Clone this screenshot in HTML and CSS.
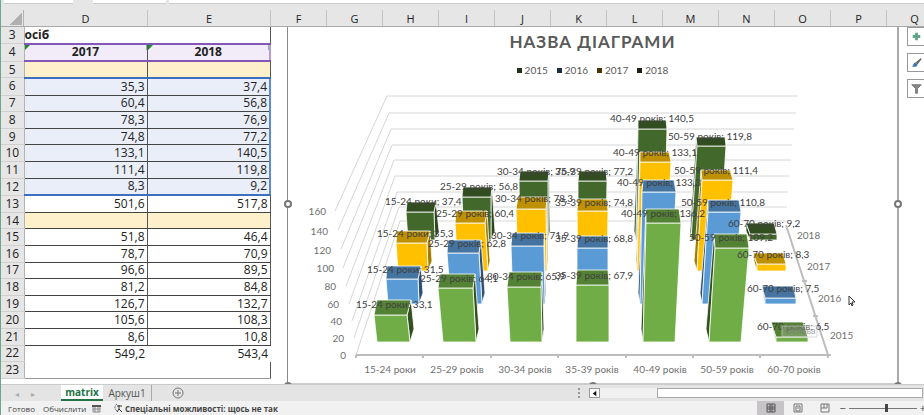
FILE: index.html
```
<!DOCTYPE html>
<html lang="uk">
  <head>
    <meta charset="UTF-8" />
    <meta name="viewport" content="width=device-width, initial-scale=1.0" />
    <title>matrix</title>
    <link rel="stylesheet" href="styles.css">
  </head>
  <body>
    <div class="formula-bar">
      <div class="name-box"></div>
      <div class="fx-box"></div>
      <div class="formula-box"></div>
    </div>

    <main class="sheet">
      <div class="col-heads">
        <div class="corner"></div>
        <div class="col wide">D</div>
        <div class="col wide">E</div>
        <div class="col">F</div>
        <div class="col">G</div>
        <div class="col">H</div>
        <div class="col">I</div>
        <div class="col">J</div>
        <div class="col">K</div>
        <div class="col">L</div>
        <div class="col">M</div>
        <div class="col">N</div>
        <div class="col">O</div>
        <div class="col">P</div>
        <div class="col">Q</div>
      </div>

      <div class="work">
        <table class="cells">
          <tbody id="rows"></tbody>
        </table>

        <section class="chart">
          <h1 class="chart-title">НАЗВА ДІАГРАМИ</h1>
          <ul class="legend">
            <li><i class="key y2015"></i>2015</li>
            <li><i class="key y2016"></i>2016</li>
            <li><i class="key y2017"></i>2017</li>
            <li><i class="key y2018"></i>2018</li>
          </ul>
          <svg class="plot" id="plot" viewBox="288 84 609 299"></svg>
          <span class="handle left"></span>
          <span class="handle right"></span>
          <span class="handle bottom-left"></span>
          <span class="handle bottom"></span>
          <span class="handle bottom-right"></span>
        </section>

        <div class="chart-tools">
          <button type="button" aria-label="Елементи діаграми">
            <svg viewBox="0 0 18 18"><path d="M9 5v8M5 9h8" stroke="#5fa58a" stroke-width="3" fill="none" /></svg>
          </button>
          <button type="button" aria-label="Стилі діаграми">
            <svg viewBox="0 0 18 18">
              <path d="M14 4L8 9l2 2 4-5z" fill="#666" />
              <path d="M8 9c-3 0-2 4-4 4 2 1 6 1 6-2z" fill="#3d78b8" />
            </svg>
          </button>
          <button type="button" aria-label="Фільтри діаграми">
            <svg viewBox="0 0 18 18"><path d="M4 5h10L10 9v5H8V9z" fill="#888" stroke="#777" /></svg>
          </button>
        </div>
      </div>
    </main>

    <div class="tab-bar">
      <div class="tab-arrows">
        <button type="button" aria-label="Назад">◂</button>
        <button type="button" aria-label="Вперед">▸</button>
      </div>
      <button type="button" class="tab active">matrix</button>
      <button type="button" class="tab">Аркуш1</button>
      <button type="button" class="add-tab" aria-label="Новий аркуш">
        <svg viewBox="0 0 12 12"><circle cx="6" cy="6" r="5" fill="none" stroke="#777" /><path d="M6 3v6M3 6h6" stroke="#777" /></svg>
      </button>
      <div class="scroll">
        <span class="dots"></span>
        <button type="button" class="scroll-left" aria-label="Прокрутити ліворуч">
          <svg viewBox="0 0 10 10"><path d="M7 2v6L3 5z" fill="#111" /></svg>
        </button>
        <div class="track"></div>
        <div class="thumb"></div>
      </div>
    </div>

    <footer class="status-bar">
      <span class="ready">Готово</span>
      <span class="calc">Обчислити</span>
      <svg class="macro" viewBox="0 0 9 9"><path d="M0 1h9v2H0z" fill="#555" /><path d="M1 3v5h7V3M1 5h7M3 3v5M6 3v5" stroke="#888" fill="none" /></svg>
      <svg class="access" viewBox="0 0 10 10">
        <path d="M4 1a4 4 0 0 0 0 7" stroke="#555" fill="none" stroke-dasharray="2 1" />
        <path d="M4 3h5M6 2v4l-2 3M6 6l3 3" stroke="#333" fill="none" />
      </svg>
      <b class="access-text">Спеціальні можливості: щось не так</b>
      <div class="views">
        <button type="button" class="view on" aria-label="Звичайний">
          <svg viewBox="0 0 10 10"><path d="M1 1h8v8H1zM1 4h8M1 6h8M4 1v8M6 1v8" stroke="#555" fill="none" /></svg>
        </button>
        <button type="button" class="view" aria-label="Розмітка сторінки">
          <svg viewBox="0 0 10 10"><path d="M1 1h8v8H1zM3 3h4v5H3zM4 5h2" stroke="#777" fill="none" /></svg>
        </button>
        <button type="button" class="view" aria-label="Сторінковий">
          <svg viewBox="0 0 10 10"><path d="M1 1h8v8H1zM1 5h6V1M4 1v4" stroke="#777" fill="none" /></svg>
        </button>
      </div>
      <div class="zoom">
        <span>−</span>
        <input type="range" min="10" max="190" value="110" aria-label="Масштаб" />
        <span>+</span>
      </div>
    </footer>

    <svg class="cursor" viewBox="0 0 8 12"><path d="M1 1v9l2-2 1 3 1-1-1-3h3z" fill="#fff" stroke="#333" /></svg>

    <script src="script.js"></script>
  </body>
</html>
```
FILE: styles.css
```
* {
  margin: 0;
  padding: 0;
  box-sizing: border-box;
}

:root {
  --sheet-font: "Open Sans", "Noto Sans", sans-serif;
  --chart-font: Lato, "Open Sans", sans-serif;
  --head-bg: #e6e6e6;
  --line: #b4b4b4;
  --purple: #8257b8;
  --blue: #3c6fc0;
}

body {
  height: 100vh;
  display: flex;
  flex-direction: column;
  overflow: hidden;
  background: #fff;
  color: #222;
  font-family: var(--sheet-font);
  border-left: 1px solid #6fa58a;
}

button {
  border: none;
  background: none;
  font-family: inherit;
}

.formula-bar {
  height: 10px;
  flex: none;
  display: flex;
  background: var(--head-bg);
  padding-left: 3px;
}

.formula-bar div {
  background: #fff;
  height: 4px;
  border-bottom: 1px solid #ccc;
}

.name-box {
  width: 69px;
  margin-right: 20px;
}

.fx-box {
  width: 73px;
  margin-right: 3px;
}

.formula-box {
  flex: 1;
}

.sheet {
  flex: 1;
  min-height: 0;
  display: flex;
  flex-direction: column;
}

.col-heads {
  height: 17px;
  flex: none;
  display: flex;
  overflow: hidden;
  background: var(--head-bg);
  border-bottom: 1px solid #aaa;
}

.corner {
  width: 23px;
  flex: none;
  border-right: 1px solid var(--line);
  background: linear-gradient(135deg, transparent 50%, #b0b0b0 50%) 8px 3px / 13px 12px no-repeat;
}

.col {
  width: 56px;
  flex: none;
  border-right: 1px solid #c4c4c4;
  text-align: center;
  font-size: 11px;
  line-height: 18px;
}

.col.wide {
  width: 124px;
}

.col.wide + .col.wide {
  width: 123px;
}

.work {
  flex: 1;
  min-height: 0;
  display: flex;
  overflow: hidden;
}

.cells {
  width: 270px;
  height: 352px;
  flex: none;
  table-layout: fixed;
  border-collapse: collapse;
  font-size: 12px;
  line-height: 14px;
}

.cells th.num {
  width: 23px;
  background: var(--head-bg);
  border-right: 1px solid var(--line);
  border-bottom: 1px solid #d0d0d0;
  font-weight: 400;
}

.cells td {
  border-right: 1px solid #555;
  border-bottom: 1px solid #444;
  padding: 0 2px;
  text-align: right;
}

.cells .title td {
  text-align: left;
  font-weight: 700;
  padding: 0;
  border-bottom: 2px solid var(--purple);
}

.cells .title td:first-of-type,
.cells .plain td {
  border-right: none;
}

.cells .years td {
  text-align: center;
  font-weight: 700;
  background: linear-gradient(135deg, #1d8a2b 4px, transparent 4px) #f2ecf9;
  border-bottom: 2px solid var(--purple);
}

.cells .years td:last-child {
  border-right: 2px solid #b79ad6;
}

.cells .band td {
  background: #fff0cc;
}

.cells .band.top td,
.cells .picked.last td {
  border-bottom: 2px solid var(--blue);
}

.cells .picked td {
  background: #e9eef9;
}

.cells .picked td:last-child {
  border-right: 2px solid #5f8dcc;
}

.cells .plain td {
  border-bottom: none;
}

.cells .blank td {
  border-bottom: 1px solid #999;
}

.cells .blank td:first-of-type {
  border-right: none;
}

.chart {
  position: relative;
  flex: 1;
  min-width: 0;
  margin-left: 16px;
  display: flex;
  flex-direction: column;
  border-left: 1px solid #888;
  border-right: 2px solid #aaa;
  border-bottom: 1px solid #ccc;
  color: #595959;
  font-family: var(--chart-font);
}

.chart-title {
  height: 30px;
  text-align: center;
  font-size: 17px;
  line-height: 29px;
  letter-spacing: 1px;
}

.legend {
  height: 27px;
  display: flex;
  justify-content: center;
  gap: 9px;
  list-style: none;
  font-size: 10px;
  line-height: 27px;
}

.legend li {
  display: flex;
  align-items: center;
  gap: 3px;
}

.key {
  width: 5px;
  height: 5px;
}

.y2015 {
  background: #22301a;
}

.y2016 {
  background: #1d2c40;
}

.y2017 {
  background: #4a3500;
}

.y2018 {
  background: #1c1f18;
}

.plot {
  flex: 1;
  min-height: 0;
  width: 100%;
}

.plot text {
  font-family: var(--chart-font);
  font-size: 10px;
  fill: #707070;
}

.plot .value {
  fill: #404040;
}

.plot .grid {
  fill: none;
  stroke: #d6d6d6;
}

.plot .axis {
  fill: none;
  stroke: #bdbdbd;
  stroke-width: 2;
}

.plot .bar path {
  stroke: #fff;
  stroke-opacity: 0.8;
  stroke-linejoin: round;
}

.plot .tip rect {
  fill: #fff;
  fill-opacity: 0.2;
  stroke: #ccc;
  stroke-opacity: 0.7;
}

.plot .tip text {
  font-size: 9px;
  fill: #777;
  fill-opacity: 0.7;
}

.handle {
  position: absolute;
  width: 8px;
  height: 8px;
  border: 2px solid #777;
  border-radius: 50%;
  background: #fff;
}

.handle.left {
  left: -4px;
  top: calc(50% - 5px);
}

.handle.right {
  right: -5px;
  top: calc(50% - 5px);
}

.handle.bottom-left {
  left: -4px;
  bottom: -7px;
}

.handle.bottom {
  left: calc(50% - 4px);
  bottom: -7px;
}

.handle.bottom-right {
  right: -5px;
  bottom: -7px;
}

.chart-tools {
  width: 17px;
  margin-left: 8px;
  flex: none;
  display: flex;
  flex-direction: column;
  gap: 7px;
}

.chart-tools button {
  width: 19px;
  height: 19px;
  border: 1px solid #999;
  background: #fff;
}

.chart-tools svg {
  display: block;
  width: 17px;
  height: 17px;
}

.tab-bar {
  height: 17px;
  flex: none;
  display: flex;
  align-items: stretch;
  background: #e4e4e4;
  border-top: 1px solid #ccc;
  font-size: 11px;
}

.tab-arrows {
  width: 60px;
  padding-left: 14px;
  display: flex;
  gap: 12px;
}

.tab-arrows button {
  color: #aaa;
  font-size: 8px;
}

.tab {
  width: 42px;
  font-size: 10px;
  color: #555;
}

.tab:not(.active) {
  width: 49px;
  border-right: 1px solid #aaa;
}

.tab.active {
  background: #fff;
  border-bottom: 2px solid #217346;
  color: #217346;
  font-weight: 700;
}

.add-tab {
  width: 12px;
  margin-left: 20px;
}

.add-tab svg {
  display: block;
  width: 12px;
}

.scroll {
  flex: 1;
  max-width: 346px;
  margin-left: auto;
  padding: 3px 1px 3px 0;
  display: flex;
}

.dots {
  width: 11px;
  border-left: 2px dotted #999;
}

.scroll-left {
  width: 11px;
  border: 1px solid #999;
  background: #fff;
}

.scroll-left svg {
  display: block;
  width: 9px;
}

.track {
  width: 57px;
  background: #f1f1f1;
}

.thumb {
  flex: 1;
  background: #fff;
  border: 1px solid #aaa;
}

.status-bar {
  height: 14px;
  flex: none;
  display: flex;
  align-items: center;
  background: #f1f1f1;
  font-size: 8px;
  color: #444;
}

.ready {
  width: 35px;
  margin-left: 7px;
}

.calc {
  width: 49px;
}

.macro {
  width: 9px;
  margin-right: 12px;
}

.access {
  width: 10px;
  margin-right: 2px;
}

.access-text {
  white-space: nowrap;
}

.views {
  margin-left: auto;
  display: flex;
}

.view {
  width: 27px;
  height: 14px;
  display: flex;
  align-items: center;
  justify-content: center;
}

.view.on {
  background: #c6c4c6;
}

.view svg {
  width: 10px;
}

.zoom {
  display: flex;
  align-items: center;
  gap: 3px;
  margin-right: -2px;
  padding-left: 1px;
  font-size: 11px;
  line-height: 14px;
}

.zoom input {
  appearance: none;
  width: 68px;
  height: 1px;
  background: #777;
}

.zoom input::-webkit-slider-thumb {
  appearance: none;
  width: 3px;
  height: 8px;
  background: #444;
}

.cursor {
  position: absolute;
  left: 848px;
  top: 295px;
  width: 8px;
}
```
FILE: script.js
```
const rows = [
  { n: 3, d: "осіб", e: "", cls: "title" },
  { n: 4, d: "2017", e: "2018", cls: "years" },
  { n: 5, d: "", e: "", cls: "band top" },
  { n: 6, d: "35,3", e: "37,4", cls: "picked" },
  { n: 7, d: "60,4", e: "56,8", cls: "picked" },
  { n: 8, d: "78,3", e: "76,9", cls: "picked" },
  { n: 9, d: "74,8", e: "77,2", cls: "picked" },
  { n: 10, d: "133,1", e: "140,5", cls: "picked" },
  { n: 11, d: "111,4", e: "119,8", cls: "picked" },
  { n: 12, d: "8,3", e: "9,2", cls: "picked last" },
  { n: 13, d: "501,6", e: "517,8", cls: "" },
  { n: 14, d: "", e: "", cls: "band" },
  { n: 15, d: "51,8", e: "46,4", cls: "" },
  { n: 16, d: "78,7", e: "70,9", cls: "" },
  { n: 17, d: "96,6", e: "89,5", cls: "" },
  { n: 18, d: "81,2", e: "84,8", cls: "" },
  { n: 19, d: "126,7", e: "132,7", cls: "" },
  { n: 20, d: "105,6", e: "108,3", cls: "" },
  { n: 21, d: "8,6", e: "10,8", cls: "" },
  { n: 22, d: "549,2", e: "543,4", cls: "plain" },
  { n: 23, d: "", e: "", cls: "blank" },
];

document.getElementById("rows").innerHTML = rows
  .map((r) => `<tr class="${r.cls}"><th class="num" scope="row">${r.n}</th><td>${r.d}</td><td>${r.e}</td></tr>`)
  .join("");

const groups = ["15-24 роки", "25-29 років", "30-34 років", "35-39 років", "40-49 років", "50-59 років", "60-70 років"];

// bars: value, label x/y, back edge (x1 x2 y), front edge (x1 x2 y), base (x1 x2), side corner x
const series = [
  {
    base: 240, back: 231, front: "#43682b", top: "#324e20", side: "#2c451d",
    bars: [
      ["37,4", 385, 205, 407, 436, 202, 406, 434, 212, 408, 435, 439],
      ["56,8", 440, 190, 463, 492, 187, 462, 491, 197, 464, 491, 495],
      ["76,9", 497, 175, 520, 549, 171, 519, 548, 181, 520, 548, 550],
      ["77,2", 555, 175, 579, 606, 171, 578, 607, 181, 578, 606, 0],
      ["140,5", 610, 122, 638, 666, 120, 638, 667, 129, 636, 664, 634],
      ["119,8", 668, 140, 696, 725, 137, 697, 726, 146, 691, 720, 690],
      ["9,2", 728, 227, 746, 774, 223, 750, 777, 234, 750, 777, 746],
    ],
  },
  {
    base: 271, back: 261, front: "#ffc000", top: "#bf9000", side: "#a67c00",
    bars: [
      ["35,3", 377, 237, 397, 430, 231, 396, 427, 243, 398, 428, 432],
      ["60,4", 436, 217, 456, 487, 211, 455, 485, 223, 458, 488, 490],
      ["78,3", 495, 202, 518, 547, 197, 516, 546, 209, 518, 547, 548],
      ["74,8", 555, 206, 578, 607, 199, 577, 608, 211, 578, 607, 0],
      ["133,1", 613, 156, 640, 669, 152, 640, 671, 162, 637, 666, 636],
      ["111,4", 674, 174, 701, 730, 170, 702, 733, 180, 697, 726, 694],
      ["8,3", 737, 258, 753, 783, 253, 757, 786, 264, 757, 786, 754],
    ],
  },
  {
    base: 304, back: 293, front: "#5b9bd5", top: "#44749f", side: "#2e5076",
    bars: [
      ["31,5", 367, 273, 387, 421, 266, 386, 418, 279, 388, 419, 423],
      ["62,8", 428, 247, 448, 481, 240, 447, 479, 253, 451, 482, 485],
      ["71,9", 491, 239, 512, 544, 233, 511, 544, 246, 513, 545, 546],
      ["68,8", 555, 242, 578, 608, 236, 577, 608, 248, 577, 608, 0],
      ["133,3", 617, 186, 643, 674, 180, 642, 676, 192, 640, 670, 638],
      ["110,8", 681, 206, 708, 739, 200, 708, 741, 212, 702, 733, 700],
      ["7,5", 747, 292, 762, 793, 286, 765, 796, 298, 765, 796, 763],
    ],
  },
  {
    base: 342, back: 329, front: "#70ad47", top: "#548235", side: "#345020",
    bars: [
      ["33,1", 356, 308, 377, 411, 300, 374, 407, 315, 377, 410, 414],
      ["64,1", 420, 282, 440, 475, 274, 438, 473, 288, 443, 476, 479],
      ["65,9", 487, 280, 509, 542, 272, 507, 541, 287, 510, 542, 544],
      ["67,9", 555, 279, 577, 608, 270, 576, 609, 285, 576, 609, 0],
      ["136,2", 621, 217, 646, 679, 209, 646, 681, 223, 643, 675, 641],
      ["109,2", 689, 241, 714, 747, 234, 715, 749, 248, 709, 741, 706],
      ["6,5", 757, 330, 771, 803, 322, 776, 808, 337, 776, 808, 773],
    ],
  },
];

// back wall x1 x2 y, then the front end of the line on the left wall
const grid = [
  [387, 798, 96, 335, 211],
  [389, 796, 113, 338, 230],
  [391, 794, 129, 341, 249],
  [392, 792, 145, 343, 268],
  [394, 791, 160, 346, 286],
  [395, 789, 176, 349, 304],
  [397, 788, 192, 352, 321],
  [399, 787, 207, 354, 338],
  [400, 786, 221, 356, 355],
];

const scale = [
  [160, 326, 215],
  [140, 328, 235],
  [120, 331, 254],
  [100, 334, 272],
  [80, 336, 290],
  [60, 339, 308],
  [40, 342, 325],
  [20, 344, 342],
  [0, 346, 359],
];

const depth = [
  [2018, 797, 239],
  [2017, 807, 270],
  [2016, 818, 302],
  [2015, 830, 339],
];

let out = "";
let labels = "";

grid.forEach(([x1, x2, y, fx, fy]) => {
  out += `<path class="grid" d="M${fx} ${fy}L${x1} ${y}H${x2}" />`;
});

out += `<path class="axis" d="M356 355H831M828 355L786 225M802 281h5M813 316h5" />`;
for (let i = 0; i < 8; i++) {
  out += `<path class="axis" d="M${356 + Math.round(i * 67.4)} 355v3" />`;
}

series.forEach((s) => {
  // the middle column faces the viewer, so draw towards it from both ends
  [0, 1, 2, 6, 5, 4, 3].forEach((i) => {
    const [value, lx, ly, bx1, bx2, by, fx1, fx2, fy, x1, x2, sx] = s.bars[i];
    out += `<g class="bar">`;
    if (i < 3) {
      out += `<path fill="${s.side}" d="M${fx2} ${fy}L${bx2} ${by}L${sx} ${s.back}L${x2} ${s.base}z" />`;
    } else if (i > 3) {
      out += `<path fill="${s.side}" d="M${fx1} ${fy}L${bx1} ${by}L${sx} ${s.back}L${x1} ${s.base}z" />`;
    }
    out += `<path fill="${s.front}" d="M${fx1} ${fy}H${fx2}L${x2} ${s.base}H${x1}z" />`;
    out += `<path fill="${s.top}" d="M${bx1} ${by}H${bx2}L${fx2} ${fy}H${fx1}z" />`;
    out += `</g>`;
    labels += `<text class="value" x="${lx}" y="${ly}">${groups[i]}; ${value}</text>`;
  });
});

scale.forEach(([v, x, y]) => {
  labels += `<text x="${x}" y="${y}" text-anchor="end">${v}</text>`;
});
depth.forEach(([v, x, y]) => {
  labels += `<text x="${x}" y="${y}">${v}</text>`;
});
groups.forEach((g, i) => {
  labels += `<text x="${390 + Math.round(i * 67.4)}" y="373" text-anchor="middle">${g}</text>`;
});

labels += `<g class="tip"><rect x="782" y="326" width="35" height="11" /><text x="785" y="334">Основа</text></g>`;

document.getElementById("plot").innerHTML = out + labels;
```
